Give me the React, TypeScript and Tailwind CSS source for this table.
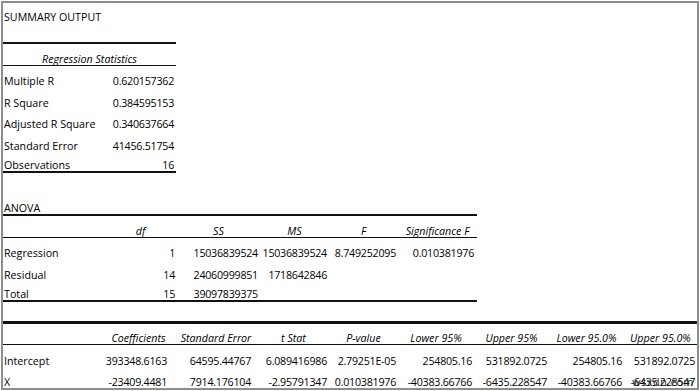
import React from "react";

const cell = "flex items-end pb-0 leading-[12px] whitespace-nowrap";
const num = `${cell} justify-end pr-[2px] tracking-[-0.25px]`;
const lab = `${cell} pl-[1px]`;
const hdr = `${cell} justify-center italic`;

function StatRow({ label, value, last }: { label: string; value: string; last?: boolean }) {
  return (
    <div className={`grid grid-cols-[107px_66px] h-[21.5px] w-[173px] ${last ? "border-b-2 border-[#111]" : ""}`}>
      <div className={lab}>{label}</div>
      <div className={num}>{value}</div>
    </div>
  );
}

const anovaCols = "grid grid-cols-[101px_73px_83px_69px_69px_79px] h-[21.5px] w-[474px]";
const coefCols = "grid grid-cols-[105px_61px_84px_76px_69px_76px_75px_75px_73px] h-[21.5px] w-[694px]";

function AnovaRow({ cells, last }: { cells: string[]; last?: boolean }) {
  return (
    <div className={`${anovaCols} ${last ? "border-b-2 border-[#111]" : ""}`}>
      <div className={lab}>{cells[0]}</div>
      <div className={num}>{cells[1]}</div>
      <div className={num}>{cells[2]}</div>
      <div className={num}>{cells[3]}</div>
      <div className={num}>{cells[4]}</div>
      <div className={`${cell} justify-end pr-[3px] tracking-[-0.25px]`}>{cells[5]}</div>
    </div>
  );
}

function CoefRow({ cells, watermark }: { cells: string[]; watermark?: boolean }) {
  return (
    <div className={coefCols}>
      <div className={lab}>{cells[0]}</div>
      {cells.slice(1).map((c, i) => (
        <div key={i} className={`${num} relative`}>
          {c}
          {watermark && i === 7 ? (
            <span className="absolute right-[3px] bottom-0 text-[#222] tracking-[0.6px]">wsxdn.com</span>
          ) : null}
        </div>
      ))}
    </div>
  );
}

export default function App() {
  return (
    <div className="w-[700px] h-[391px] bg-white overflow-hidden">
      <div className="ml-[1px] mt-[1px] w-[698px] h-[389px] border-2 border-[#8e8e8e] text-[10.7px] text-black font-['Open_Sans',sans-serif] flex flex-col">
        <div className={`h-[19.5px] ${lab}`}>SUMMARY OUTPUT</div>
        <div className="h-[21.5px] w-[173px] border-b-2 border-[#111]" />
        <div className={`h-[21.5px] w-[173px] border-b border-[#111] ${hdr}`}>Regression Statistics</div>
        <StatRow label="Multiple R" value="0.620157362" />
        <StatRow label="R Square" value="0.384595153" />
        <StatRow label="Adjusted R Square" value="0.340637664" />
        <StatRow label="Standard Error" value="41456.51754" />
        <StatRow label="Observations" value="16" last />
        <div className="h-[21.5px]" />
        <div className={`h-[21.5px] w-[474px] border-b-2 border-[#111] ${lab}`}>ANOVA</div>
        <div className={`${anovaCols} border-b border-[#111]`}>
          <div />
          <div className={hdr}>df</div>
          <div className={hdr}>SS</div>
          <div className={hdr}>MS</div>
          <div className={hdr}>F</div>
          <div className={hdr}>Significance F</div>
        </div>
        <AnovaRow cells={["Regression", "1", "15036839524", "15036839524", "8.749252095", "0.010381976"]} />
        <AnovaRow cells={["Residual", "14", "24060999851", "1718642846", "", ""]} />
        <AnovaRow cells={["Total", "15", "39097839375", "", "", ""]} last />
        <div className="h-[21.5px] w-[694px] border-b-[3px] border-[#111]" />
        <div className={`${coefCols} border-b border-[#111]`}>
          <div />
          <div className={hdr}>Coefficients</div>
          <div className={`${hdr} pl-[10px]`}>Standard Error</div>
          <div className={`${hdr} pl-[5px]`}>t Stat</div>
          <div className={hdr}>P-value</div>
          <div className={hdr}>Lower 95%</div>
          <div className={hdr}>Upper 95%</div>
          <div className={hdr}>Lower 95.0%</div>
          <div className={hdr}>Upper 95.0%</div>
        </div>
        <CoefRow cells={["Intercept", "393348.6163", "64595.44767", "6.089416986", "2.79251E-05", "254805.16", "531892.0725", "254805.16", "531892.0725"]} />
        <CoefRow watermark cells={["X", "-23409.4481", "7914.176104", "-2.95791347", "0.010381976", "-40383.66766", "-6435.228547", "-40383.66766", "-6435.228547"]} />
      </div>
    </div>
  );
}
